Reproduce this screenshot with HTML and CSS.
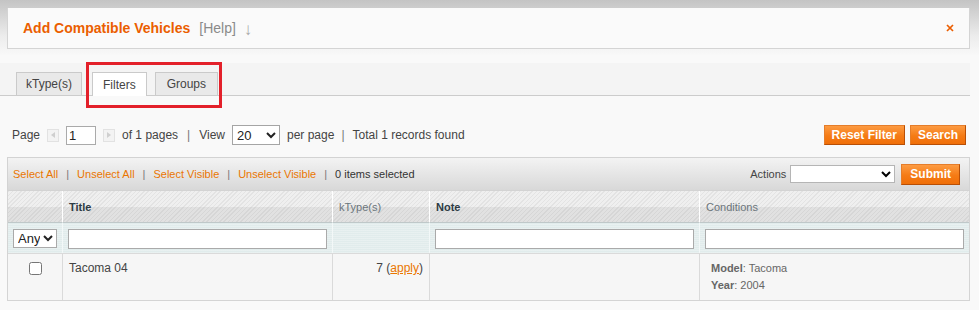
FILE: index.html
```html
<!DOCTYPE html>
<html lang="en">
<head>
<meta charset="utf-8">
<title>Add Compatible Vehicles</title>
<link rel="stylesheet" href="styles.css">
</head>
<body>
<div class="page">
  <div class="head">
    <h3 class="head-title">Add Compatible Vehicles</h3>
    <span class="help">[Help]</span>
    <span class="arrow">↓</span>
    <span class="close"><svg width="8" height="8" viewBox="0 0 8 8"><path d="M1 1L7 7M7 1L1 7" stroke="#eb5e00" stroke-width="1.7" fill="none"/></svg></span>
  </div>

  <div class="tabs">
    <span class="tab">kType(s)</span>
    <span class="tab active">Filters</span>
    <span class="tab">Groups</span>
  </div>
  <div class="highlight"></div>

  <div class="pager">
    <span>Page</span>
    <span class="pg-btn"><svg width="4" height="6" viewBox="0 0 4 6"><path d="M4 0L0 3L4 6Z" fill="#cfcfcf"/></svg></span>
    <input class="pg-input" type="text" value="1">
    <span class="pg-btn"><svg width="4" height="6" viewBox="0 0 4 6"><path d="M0 0L4 3L0 6Z" fill="#cfcfcf"/></svg></span>
    <span>of 1 pages</span>
    <span class="sep">|</span>
    <span>View</span>
    <select class="pg-select"><option>20</option></select>
    <span>per page</span>
    <span class="sep sep-tight">|</span>
    <span>Total 1 records found</span>
    <div class="pager-actions">
      <button class="btn">Reset Filter</button>
      <button class="btn">Search</button>
    </div>
  </div>

  <div class="massaction">
    <a class="ma-link">Select All</a><span class="ma-sep">|</span>
    <a class="ma-link">Unselect All</a><span class="ma-sep">|</span>
    <a class="ma-link">Select Visible</a><span class="ma-sep">|</span>
    <a class="ma-link">Unselect Visible</a><span class="ma-sep">|</span>
    <span class="ma-count">0 items selected</span>
    <div class="ma-right">
      <span class="ma-label">Actions</span>
      <select class="ma-select"><option></option></select>
      <button class="btn btn-submit">Submit</button>
    </div>
  </div>

  <table class="grid">
    <colgroup>
      <col class="c1"><col class="c2"><col class="c3"><col class="c4"><col class="c5">
    </colgroup>
    <thead>
      <tr class="headings">
        <th></th>
        <th class="sortable">Title</th>
        <th class="plain">kType(s)</th>
        <th class="sortable">Note</th>
        <th class="plain last">Conditions</th>
      </tr>
      <tr class="filter">
        <td class="f-first"><select class="any-select"><option>Any</option></select></td>
        <td><input class="f-input" type="text"></td>
        <td></td>
        <td><input class="f-input" type="text"></td>
        <td class="last"><input class="f-input" type="text"></td>
      </tr>
    </thead>
    <tbody>
      <tr class="row">
        <td class="cb-cell"><input type="checkbox" class="cb"></td>
        <td>Tacoma 04</td>
        <td class="num">7 (<a class="apply">apply</a>)</td>
        <td></td>
        <td class="cond last"><div><b>Model</b>: Tacoma</div><div><b>Year</b>: 2004</div></td>
      </tr>
    </tbody>
  </table>
</div>
</body>
</html>
```

FILE: styles.css
```css
* { box-sizing: border-box; }

body {
  margin: 0;
  font-family: "Liberation Sans", Arial, sans-serif;
  font-size: 12px;
  color: #444;
  background: linear-gradient(#c4c4c4 0, #ececec 36px, #f9f9f9 56px) no-repeat, #f9f9f9;
  min-height: 310px;
}

.page {
  position: relative;
  padding: 8px 9px 10px 7px;
}

/* header box */
.head {
  height: 41px;
  background: #fafafa;
  border: 1px solid #d4d4d4;
  border-top: 0;
  display: flex;
  align-items: center;
  padding: 0 15px 0 15px;
}
.head-title {
  margin: 0;
  font-size: 14px;
  font-weight: bold;
  color: #eb5e00;
}
.help {
  margin-left: 9px;
  font-size: 14px;
  color: #8a8a8a;
}
.arrow {
  margin-left: 8px;
  font-size: 17px;
  line-height: 1;
  color: #a8a8a8;
  padding-top: 2px;
}
.close {
  margin-left: auto;
  display: flex;
}

/* tabs */
.tabs {
  margin: 14px 0 0 -7px;
  padding: 9px 0 0 16px;
  height: 33px;
  background: #f4f4f4;
  border-bottom: 1px solid #cccccc;
  display: flex;
  gap: 8px;
}
.tab {
  height: 23px;
  padding: 0 9px;
  border: 1px solid #cacaca;
  border-bottom: 0;
  background: #e9e9e9;
  color: #444;
  font-size: 12px;
  display: flex;
  align-items: center;
}
.tab.active {
  background: #fff;
  height: 24px;
  margin-bottom: -1px;
  margin-left: 2px;
  padding: 0 10px;
}
.tab:last-child {
  padding: 0 11px;
}

.highlight {
  position: absolute;
  left: 86px;
  top: 62px;
  width: 136px;
  height: 46px;
  border: 3px solid #e3202a;
}

/* pager */
.pager {
  margin-top: 29px;
  height: 20px;
  display: flex;
  align-items: center;
  gap: 7px;
  padding: 0 4px 0 5px;
  color: #444;
}
.pg-btn {
  width: 12px;
  height: 13px;
  border: 1px solid #e2e2e2;
  background: #f3f3f3;
  display: flex;
  align-items: center;
  justify-content: center;
}
.pg-input {
  width: 30px;
  height: 19px;
  border: 1px solid #aaa;
  background: #fff;
  font: 13px "Liberation Sans", Arial, sans-serif;
  padding: 0 2px;
  color: #222;
}
.sep {
  margin: 0 2px;
  color: #777;
}
.sep-tight {
  margin: 0 1px 0 0;
}
.pg-select {
  width: 48px;
  height: 20px;
  border: 1px solid #a5a5a5;
  background: #fff;
  font: 13px "Liberation Sans", Arial, sans-serif;
  color: #222;
  border-radius: 0;
}
.pager-actions {
  margin-left: auto;
  display: flex;
  gap: 5px;
}
.btn {
  height: 20px;
  padding: 0 7px;
  border: 1px solid;
  border-color: #e57d2a #b84f06 #b84f06 #e57d2a;
  background: linear-gradient(#fd9b42, #f57b15 55%, #f06f09);
  color: #fff;
  font: bold 12px "Liberation Sans", Arial, sans-serif;
  cursor: pointer;
}

/* mass action bar */
.massaction {
  margin-top: 12px;
  height: 34px;
  border: 1px solid #d3d3d3;
  background: linear-gradient(#f3f3f3, #d8d8d8);
  display: flex;
  align-items: center;
  padding: 0 9px 0 5px;
  font-size: 11px;
}
.ma-link {
  color: #ea7601;
}
.ma-sep {
  margin: 0 8px;
  color: #777;
}
.ma-count {
  color: #333;
}
.ma-right {
  margin-left: auto;
  display: flex;
  align-items: center;
}
.ma-label {
  color: #444;
}
.ma-select {
  margin-left: 4px;
  width: 105px;
  height: 18px;
  border: 1px solid #b5b5b5;
  background: #fff;
  border-radius: 0;
}
.btn-submit {
  margin-left: 6px;
  height: 21px;
  padding: 0 8px;
}

/* grid */
.grid {
  width: 963px;
  table-layout: fixed;
  border-collapse: separate;
  border-spacing: 0;
  border: 1px solid #d4d4d4;
  border-top: 0;
}
.c1 { width: 55px; }
.c2 { width: 270px; }
.c3 { width: 97px; }
.c4 { width: 270px; }
.c5 { width: 269px; }

.headings th {
  height: 31px;
  padding: 0 6px;
  text-align: left;
  font-size: 11px;
  border-right: 1px solid #fff;
  background:
    linear-gradient(to bottom, rgba(0,0,0,0) 50%, rgba(0,0,0,0.06) 50%),
    repeating-linear-gradient(135deg, #e3e3e3 0 1px, #efefef 1px 3px);
}
.headings th.sortable {
  color: #2d3b44;
  font-weight: bold;
}
.headings th.plain {
  color: #6b757b;
  font-weight: normal;
}
.headings th.last,
.filter td.last,
.row td.last {
  border-right: 0;
}

.filter td {
  height: 31px;
  padding: 0 5px 0 5px;
  border-top: 1px solid #bfc8c9;
  border-right: 1px solid #f3f8f8;
  background:
    repeating-linear-gradient(0deg, rgba(255,255,255,0.25) 0 1px, rgba(255,255,255,0) 1px 2px),
    #e1ecec;
  vertical-align: middle;
}
.filter td.f-first {
  padding: 0 0 0 5px;
}
.any-select {
  width: 44px;
  height: 19px;
  border: 1px solid #aaa;
  background: #fff;
  border-radius: 0;
  font: 13px "Liberation Sans", Arial, sans-serif;
  color: #222;
  padding: 0;
}
.f-input {
  display: block;
  width: 100%;
  height: 20px;
  border: 1px solid #aaa;
  background: #fff;
  margin-top: 1px;
}

.row td {
  padding: 7px 6px;
  vertical-align: top;
  background: #f6f6f6;
  border-top: 1px solid #dadada;
  border-right: 1px solid #dadada;
  font-size: 12px;
  color: #444;
  line-height: 15px;
}
.row td.cb-cell {
  text-align: center;
  padding-top: 8px;
}
.cb {
  margin: 0;
  width: 13px;
  height: 13px;
  vertical-align: top;
}
.row td.num {
  text-align: right;
}
.apply {
  color: #ea7601;
  text-decoration: underline;
}
.row td.cond {
  padding: 6px 12px 6px 11px;
  font-size: 11px;
  line-height: 17px;
  color: #666;
}
.cond b {
  color: #666;
}
```
